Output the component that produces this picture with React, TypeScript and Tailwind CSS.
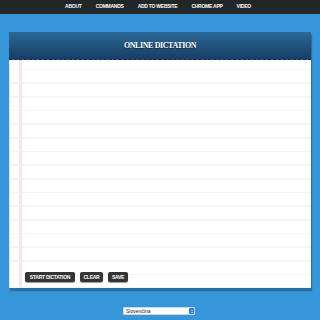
import React from "react";

export default function App() {
  const nav = ["ABOUT", "COMMANDS", "ADD TO WEBSITE", "CHROME APP", "VIDEO"];
  const btn = "h-[10px] bg-[#343434] rounded-[2px] text-white font-bold text-[5px] tracking-[-0.25px] leading-none shadow-[0_1px_1px_rgba(0,0,0,0.4)] flex items-center justify-center";
  return (
    <div className="w-[320px] h-[320px] bg-[#3795da] flex flex-col overflow-hidden" style={{ fontFamily: "'Liberation Sans', Arial, sans-serif" }}>
      <div className="h-[14px] bg-[#222629] flex items-center justify-center gap-[14px] pr-[4px] pb-[2px]">
        {nav.map((n) => (
          <span key={n} className="text-white font-bold text-[5px] tracking-[-0.25px] leading-none">{n}</span>
        ))}
      </div>
      <div className="mt-[18px] mx-[9px] h-[256px] flex flex-col shadow-[1px_3px_1px_rgba(0,0,0,0.25)]">
        <div className="h-[28px] bg-gradient-to-b from-[#2c6898] to-[#173e65] border-b border-dashed border-[#0f2a45] flex items-center justify-center">
          <span className="text-white font-bold text-[8px] tracking-[-0.4px] mt-[1px]" style={{ fontFamily: "'Liberation Serif', 'Times New Roman', serif", textShadow: "0 1px 1px rgba(0,0,0,0.5)" }}>ONLINE DICTATION</span>
        </div>
        <div className="relative flex-1 bg-white bg-[repeating-linear-gradient(to_bottom,transparent_0px,transparent_8.6px,#f5f5f5_8.6px,#f5f5f5_10.2px,transparent_10.2px,transparent_13.67px)] border-l border-[#e4e4e4] flex flex-col justify-end pb-[6px] pl-[15px]">
          <div className="absolute left-[9px] top-0 bottom-0 w-[3px] bg-[#fde4ec]" />
          <div className="flex gap-[5px] relative">
            <div className={btn + " w-[50px]"}>START DICTATION</div>
            <div className={btn + " w-[23px]"}>CLEAR</div>
            <div className={btn + " w-[20px]"}>SAVE</div>
          </div>
        </div>
      </div>
      <div className="mt-[19px] flex justify-center">
        <div className="w-[72px] h-[8px] bg-white rounded-[1px] flex items-center justify-between pl-[2px] ml-[-2px] border border-[#c8d6e6]">
          <span className="text-[5px] leading-none text-[#222]">Slovenčina</span>
          <div className="w-[5px] h-full bg-[#2f7ae5] rounded-[1px] flex flex-col items-center justify-center gap-[1px]">
            <div className="w-0 h-0 border-l-[1.5px] border-r-[1.5px] border-b-[1.5px] border-l-transparent border-r-transparent border-b-white" />
            <div className="w-0 h-0 border-l-[1.5px] border-r-[1.5px] border-t-[1.5px] border-l-transparent border-r-transparent border-t-white" />
          </div>
        </div>
      </div>
    </div>
  );
}
